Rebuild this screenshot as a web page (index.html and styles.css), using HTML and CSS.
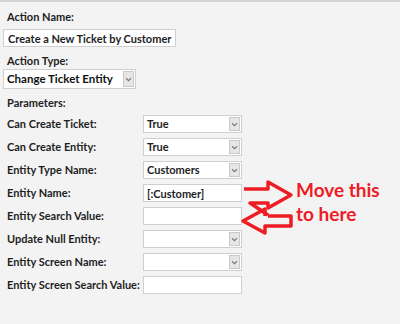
FILE: index.html
```html
<!DOCTYPE html>
<html lang="en">
<head>
    <meta charset="UTF-8">
    <title>Action Editor</title>
    <link rel="stylesheet" href="styles.css">
</head>
<body>

    <div class="panel">
        <div class="field-label first">Action Name:</div>
        <input type="text" class="textbox action-name" value="Create a New Ticket by Customer">

        <div class="field-label">Action Type:</div>
        <div class="select action-type">
            <span class="select-value">Change Ticket Entity</span>
            <span class="drop-btn"><svg viewBox="0 0 8 6" width="7" height="5"><path d="M1 1.5 L4 4.5 L7 1.5" fill="none" stroke="#777" stroke-width="1.3"/></svg></span>
        </div>

        <div class="field-label">Parameters:</div>

        <div class="params">
            <div class="param-label">Can Create Ticket:</div>
            <div class="select">
                <span class="select-value">True</span>
                <span class="drop-btn"><svg viewBox="0 0 8 6" width="7" height="5"><path d="M1 1.5 L4 4.5 L7 1.5" fill="none" stroke="#777" stroke-width="1.3"/></svg></span>
            </div>

            <div class="param-label">Can Create Entity:</div>
            <div class="select">
                <span class="select-value">True</span>
                <span class="drop-btn"><svg viewBox="0 0 8 6" width="7" height="5"><path d="M1 1.5 L4 4.5 L7 1.5" fill="none" stroke="#777" stroke-width="1.3"/></svg></span>
            </div>

            <div class="param-label">Entity Type Name:</div>
            <div class="select">
                <span class="select-value">Customers</span>
                <span class="drop-btn"><svg viewBox="0 0 8 6" width="7" height="5"><path d="M1 1.5 L4 4.5 L7 1.5" fill="none" stroke="#777" stroke-width="1.3"/></svg></span>
            </div>

            <div class="param-label">Entity Name:</div>
            <input type="text" class="textbox" value="[:Customer]">

            <div class="param-label">Entity Search Value:</div>
            <input type="text" class="textbox" value="">

            <div class="param-label">Update Null Entity:</div>
            <div class="select">
                <span class="select-value"></span>
                <span class="drop-btn"><svg viewBox="0 0 8 6" width="7" height="5"><path d="M1 1.5 L4 4.5 L7 1.5" fill="none" stroke="#777" stroke-width="1.3"/></svg></span>
            </div>

            <div class="param-label">Entity Screen Name:</div>
            <div class="select">
                <span class="select-value"></span>
                <span class="drop-btn"><svg viewBox="0 0 8 6" width="7" height="5"><path d="M1 1.5 L4 4.5 L7 1.5" fill="none" stroke="#777" stroke-width="1.3"/></svg></span>
            </div>

            <div class="param-label">Entity Screen Search Value:</div>
            <input type="text" class="textbox" value="">
        </div>

        <!-- annotation drawn over the form -->
        <div class="note">
            <svg class="note-arrows" viewBox="0 0 58 60" width="58" height="60">
                <path d="M6 12 L30 12 L30 5 L53 18 L30 31 L30 26 L12 26 L30 38"
                      fill="none" stroke="#ee1c24" stroke-width="3.5" stroke-linejoin="round"/>
                <path d="M30 39 L53 39 L53 49 L27 49 L27 56 L5 44 L27 32 L27 39"
                      fill="none" stroke="#ee1c24" stroke-width="3.5" stroke-linejoin="round"/>
            </svg>
            <div class="note-text">Move this<br>to here</div>
        </div>
    </div>

</body>
</html>
```

FILE: styles.css
```css
body {
    margin: 0;
    padding: 0;
    background-color: #f3f3f3;
    border-top: 2px solid #d4d4d4;
    font-family: 'Lato', 'Liberation Sans', sans-serif;
    font-size: 11px;
    font-weight: bold;
    color: #1e1e1e;
    height: 322px;
    overflow: hidden;
}

.panel {
    position: relative;
    padding: 0 0 0 3px;
}

.field-label {
    padding-left: 4px;
    line-height: 16px;
    margin-top: 6px;
}

.field-label.first {
    margin-top: 7px;
}

.textbox {
    display: block;
    box-sizing: border-box;
    height: 18px;
    margin: 0;
    padding: 0 3px;
    border: 1px solid #cfcfcf;
    background: white;
    font-family: inherit;
    font-size: 11px;
    font-weight: bold;
    color: #1e1e1e;
    outline: none;
}

.action-name {
    width: 173px;
    margin-top: 4px;
    padding-left: 4px;
}

.select {
    box-sizing: border-box;
    display: flex;
    align-items: stretch;
    height: 18px;
    border: 1px solid #cfcfcf;
    background: white;
}

.select-value {
    flex: 1;
    padding-left: 3px;
    line-height: 16px;
}

.drop-btn {
    width: 9px;
    margin: 1px;
    background: #e6e6e6;
    border: 1px solid #c9c9c9;
    display: flex;
    align-items: center;
    justify-content: center;
}

.action-type {
    width: 133px;
    height: 20px;
    margin-top: 0;
}

.action-type .select-value {
    line-height: 18px;
    font-size: 11.5px;
    color: #111;
}

.params {
    display: grid;
    grid-template-columns: 140px 99px;
    grid-auto-rows: 18px;
    row-gap: 5px;
    margin-top: 4px;
}

.param-label {
    padding-left: 4px;
    line-height: 18px;
    white-space: nowrap;
}

.params .textbox {
    width: 99px;
}

.note {
    position: absolute;
    left: 238px;
    top: 168px;
    display: flex;
    align-items: flex-start;
}

.note-text {
    color: #ee1c24;
    font-size: 19px;
    font-weight: bold;
    line-height: 24px;
    margin-top: 1px;
}
```
